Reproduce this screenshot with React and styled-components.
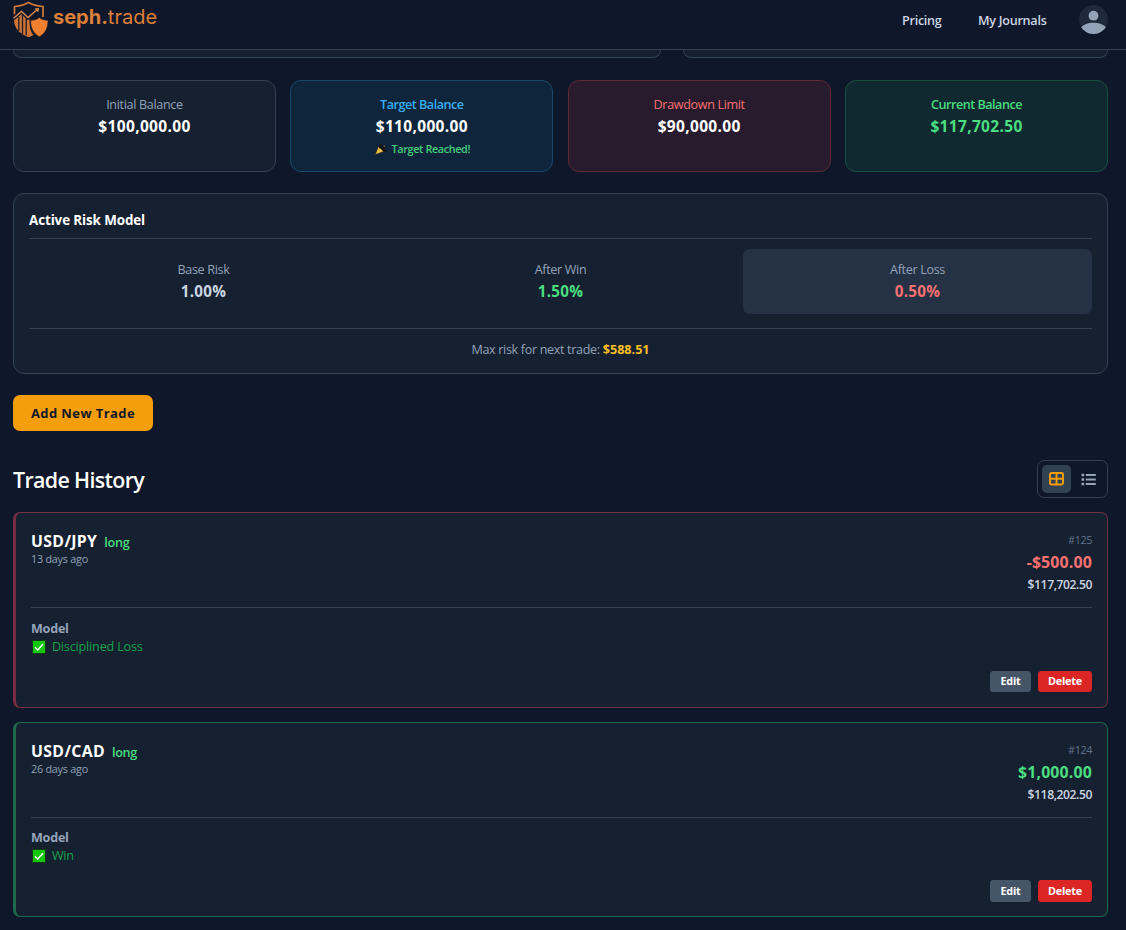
import React from "react";
import styled, { createGlobalStyle } from "styled-components";

const Global = createGlobalStyle`
  *, *::before, *::after { box-sizing: border-box; }
  html, body { margin: 0; background: #0f172a; }
  body { height: 930px; overflow: hidden; font-family: "Open Sans", "Noto Sans", sans-serif; color: #cbd5e1; }
  button { font-family: inherit; }
`;

const Page = styled.div`
  height: 930px;
  overflow: hidden;
  background: #0f172a;
`;

const Header = styled.header`
  height: 50px;
  border-bottom: 1px solid #334155;
  display: flex;
  align-items: flex-start;
  justify-content: space-between;
  padding: 0 18px 0 12px;
`;

const Brand = styled.div`
  display: flex;
  gap: 5px;
  height: 40px;
`;

const Wordmark = styled.div`
  font-family: Inter, sans-serif;
  font-size: 20px;
  line-height: 35px;
  color: #dc7f38;
  font-weight: 400;
  b { font-weight: 700; }
`;

const Nav = styled.nav`
  display: flex;
  align-items: center;
  height: 40px;
`;

const NavLink = styled.a`
  padding-top: 2px;
  font-size: 12.6px;
  font-weight: 600;
  color: #cbd5e1;
  line-height: 20px;
  width: ${(p) => p.$w}px;
  white-space: nowrap;
  letter-spacing: -0.27px;
`;

const Main = styled.main`
  padding: 0 18px 0 13px;
`;

const Stubs = styled.div`
  display: grid;
  grid-template-columns: 648px 425px;
  gap: 22px;
  height: 8px;
`;

const Stub = styled.div`
  background: #152030;
  border: 1px solid #334155;
  border-top: 0;
  border-radius: 0 0 11px 11px;
`;

const Stats = styled.section`
  display: grid;
  grid-template-columns: repeat(4, 1fr);
  gap: 14.4px;
  margin-top: 22px;
`;

const tones = {
  plain: ["#152030", "#334155", "#ffffff"],
  blue: ["#0f253c", "#164a68", "#ffffff"],
  red: ["#271b2d", "#5e2835", "#ffffff"],
  green: ["#102830", "#17513f", "#4ade80"],
};

const Stat = styled.div`
  height: 92px;
  padding-top: 14px;
  border-radius: 11px;
  text-align: center;
  background: ${(p) => tones[p.$tone][0]};
  border: 1px solid ${(p) => tones[p.$tone][1]};
  color: ${(p) => tones[p.$tone][2]};
`;

const Label = styled.div`
  font-size: 12.6px;
  line-height: 20px;
  font-weight: ${(p) => p.$weight || 400};
  color: ${(p) => p.$color || "#94a3b8"};
  letter-spacing: ${(p) => p.$ls || -0.34}px;
`;

const Value = styled.div`
  font-size: ${(p) => p.$size || 15.5}px;
  line-height: 23px;
  font-weight: 700;
  color: ${(p) => p.$color || "inherit"};
  letter-spacing: 0.33px;
`;

const Reached = styled.div`
  display: flex;
  align-items: center;
  justify-content: center;
  gap: 5px;
  padding-left: 1px;
  font-size: 10.8px;
  font-weight: 600;
  line-height: 21px;
  color: #43cf79;
  letter-spacing: -0.36px;
`;

const RiskPanel = styled.section`
  margin-top: 21px;
  height: 181px;
  padding: 0 15px;
  border: 1px solid #334155;
  border-radius: 11px;
  background: #152030;
`;

const RiskTitle = styled.h3`
  margin: 0;
  height: 45px;
  padding-top: 16px;
  border-bottom: 1px solid #334155;
  font-size: 13.4px;
  line-height: 20px;
  font-weight: 700;
  color: #fff;
  letter-spacing: -0.1px;
`;

const RiskGrid = styled.div`
  display: grid;
  grid-template-columns: repeat(3, 1fr);
  gap: 8px;
  margin-top: 10px;
`;

const RiskCell = styled.div`
  height: 65px;
  padding-top: 11px;
  border-radius: 7px;
  text-align: center;
  background: ${(p) => (p.$active ? "#253144" : "transparent")};
`;

const MaxRisk = styled.div`
  margin-top: 14px;
  padding-top: 11px;
  border-top: 1px solid #334155;
  text-align: center;
  font-size: 12.6px;
  line-height: 20px;
  color: #94a3b8;
  letter-spacing: -0.34px;
  b { color: #fbbf24; font-weight: 700; letter-spacing: 0; }
`;

const AddButton = styled.button`
  display: block;
  margin-top: 21px;
  width: 140px;
  height: 36px;
  padding: 0;
  border: 0;
  border-radius: 7px;
  background: #f59e0b;
  color: #111827;
  font-size: 13px;
  font-weight: 700;
  letter-spacing: 0.42px;
`;

const HistoryBar = styled.div`
  display: flex;
  align-items: center;
  justify-content: space-between;
  margin-top: 29px;
  height: 38px;
`;

const HistoryTitle = styled.h2`
  margin: 0;
  padding-top: 2px;
  font-size: 21.4px;
  line-height: 30px;
  font-weight: 600;
  color: #fff;
  letter-spacing: -0.65px;
`;

const Toggle = styled.div`
  display: flex;
  gap: 3px;
  width: 71px;
  height: 38px;
  padding: 4px;
  border: 1px solid #334155;
  border-radius: 7px;
`;

const ToggleButton = styled.button`
  display: flex;
  align-items: center;
  justify-content: center;
  width: 29px;
  height: 28px;
  padding: 0;
  border: 0;
  border-radius: 5px;
  color: ${(p) => (p.$active ? "#f59e0b" : "#94a3b8")};
  background: ${(p) => (p.$active ? "#334155" : "transparent")};
`;

const Trade = styled.article`
  margin-top: 14px;
  height: 195.5px;
  padding: 0 15px;
  border: 1px solid ${(p) => (p.$win ? "#1d6b4c" : "#752f40")};
  border-left-width: 3px;
  border-radius: 7px;
  background: #152030;
`;

const TradeTop = styled.div`
  display: flex;
  justify-content: space-between;
  height: 95px;
  padding-top: 17px;
  border-bottom: 1px solid #334155;
`;

const PairRow = styled.div`
  display: flex;
  align-items: baseline;
  gap: 7px;
  height: 21px;
  line-height: 22px;
`;

const Pair = styled.span`
  font-size: 15.8px;
  font-weight: 700;
  color: #fff;
  letter-spacing: 0.35px;
`;

const Side = styled.span`
  font-size: 12.6px;
  font-weight: 600;
  color: #4ade80;
  letter-spacing: -0.3px;
`;

const Ago = styled.div`
  font-size: 10.8px;
  line-height: 16px;
  color: #94a3b8;
  letter-spacing: -0.23px;
`;

const Amounts = styled.div`
  text-align: right;
`;

const Num = styled.div`
  font-size: 10.8px;
  line-height: 20px;
  color: #64748b;
  letter-spacing: -0.4px;
`;

const Pnl = styled.div`
  font-size: 15.9px;
  line-height: 25px;
  font-weight: 700;
  color: ${(p) => (p.$win ? "#4ade80" : "#f87171")};
  letter-spacing: 0.15px;
`;

const Balance = styled.div`
  font-size: 12.2px;
  line-height: 19px;
  font-weight: 600;
  color: #cbd5e1;
  letter-spacing: -0.45px;
`;

const ModelTitle = styled.div`
  margin-top: 11.6px;
  font-size: 12.6px;
  line-height: 18px;
  font-weight: 700;
  color: #94a3b8;
  letter-spacing: -0.25px;
`;

const Outcome = styled.div`
  display: flex;
  align-items: center;
  gap: 5.6px;
  padding-left: 1.3px;
  font-size: 12.6px;
  line-height: 18px;
  font-weight: 500;
  color: #16a34a;
  letter-spacing: -0.17px;
`;

const Actions = styled.div`
  display: flex;
  justify-content: flex-end;
  gap: 7px;
  margin-top: 15.4px;
`;

const ActionButton = styled.button`
  width: ${(p) => (p.$danger ? 54 : 41)}px;
  height: 21.5px;
  padding: 0 0 2px;
  border: 0;
  border-radius: 3.6px;
  background: ${(p) => (p.$danger ? "#dc2626" : "#475569")};
  color: #fff;
  font-size: 10.8px;
  font-weight: 700;
  letter-spacing: -0.2px;
`;

const Logo = () => (
  <svg width="36" height="40" viewBox="0 0 36 40" fill="none">
    <path d="M2.500 14.500V6.500C7.500 6.500 12 5 16.500 2.600C21 5 26 6.500 31 6.500V17" stroke="#d07a38" strokeWidth="1.700" />
    <path d="M2 20L9.500 13.500L16 19.500L17.500 18.500C17.300 27 18.500 31.500 21.500 35C19.800 36 18 36.800 16.500 37.200C7 33.500 2.200 28 2 20Z" fill="#d07434" />
    <path d="M6.800 17V31M10.500 15V34M14.200 18V35.500" stroke="#1c1d2a" strokeWidth="1.300" />
    <path d="M1.500 18.300L9.500 11.500L16 17.500L25.500 9.200" stroke="#0f172a" strokeWidth="4" />
    <path d="M1.500 18.300L9.500 11.500L16 17.500L25.500 9.200" stroke="#d98a4a" strokeWidth="1.400" />
    <path d="M22.500 8.500L27 8L26.300 12.500Z" fill="#d98a4a" />
    <path d="M27.300 17.500C29.800 19.500 32.500 20.200 36 20.200C36.200 28 33.200 33.500 27.300 36.800C21.300 33.500 18.400 28 18.600 20.200C22 20.200 24.800 19.500 27.300 17.500Z" fill="#f08030" stroke="#0f172a" strokeWidth="0.700" />
  </svg>
);

const Avatar = () => (
  <svg width="29" height="30" viewBox="0 0 29 30">
    <defs><clipPath id="avatar"><circle cx="14.500" cy="14.500" r="14.500" /></clipPath></defs>
    <circle cx="14.500" cy="14.500" r="14.500" fill="#1e293b" />
    <g clipPath="url(#avatar)" fill="#94a3b8">
      <circle cx="14.500" cy="10.700" r="4.900" />
      <path d="M2 22.500C5 19 10 17.800 14.500 17.800C19 17.800 24 19 27 22.500V30H2Z" />
    </g>
  </svg>
);

const Party = () => (
  <svg width="12" height="12" viewBox="0 0 12 12">
    <path d="M0.300 11.500L3.500 3.500L8.700 8.500Z" fill="#f0c048" stroke="#1d1712" strokeWidth="0.400" />
    <path d="M4 4.500C6.500 4.500 6.500 2.500 5.200 1.200M7 6.500L10 3.500M8 8C9.500 7 10.500 7.300 11.500 8.500" stroke="#17120e" strokeWidth="2" fill="none" />
    <circle cx="9.300" cy="3.200" r="0.700" fill="#a0702a" />
  </svg>
);

const Check = () => (
  <svg width="14" height="14" viewBox="0 0 14 14">
    <rect x="0.500" y="0.500" width="13" height="13" rx="0.800" fill="#16c60c" stroke="#0a3d14" />
    <path d="M3 7.200L5.700 10L11 4.200" fill="none" stroke="#fff" strokeWidth="1.400" />
  </svg>
);

const GridIcon = () => (
  <svg width="15" height="14" viewBox="0 0 15 14" fill="none" stroke="currentColor" strokeWidth="1.900">
    <rect x="1" y="1" width="13" height="11.500" rx="1.500" />
    <path d="M7.500 1V12.500M1 6.800H14" />
  </svg>
);

const ListIcon = () => (
  <svg width="15" height="13" viewBox="0 0 15 13" fill="none" stroke="currentColor" strokeWidth="1.900">
    <path d="M4.800 2H14.800M4.800 6.500H14.800M4.800 11H14.800" />
    <path d="M0.500 2H3.200M0.500 6.500H3.200M0.500 11H3.200" strokeWidth="2.600" />
  </svg>
);

const trades = [
  { pair: "USD/JPY", ago: "13 days ago", num: "#125", pnl: "-$500.00", bal: "$117,702.50", out: "Disciplined Loss", win: false },
  { pair: "USD/CAD", ago: "26 days ago", num: "#124", pnl: "$1,000.00", bal: "$118,202.50", out: "Win", win: true },
];

export default function App() {
  return (
    <Page>
      <Global />
      <Header>
        <Brand>
          <Logo />
          <Wordmark><b>seph.</b>trade</Wordmark>
        </Brand>
        <Nav>
          <NavLink $w={76}>Pricing</NavLink>
          <NavLink $w={101}>My Journals</NavLink>
          <Avatar />
        </Nav>
      </Header>
      <Main>
        <Stubs><Stub /><Stub /></Stubs>
        <Stats>
          <Stat $tone="plain"><Label>Initial Balance</Label><Value>$100,000.00</Value></Stat>
          <Stat $tone="blue">
            <Label $weight={600} $color="#38aef0" $ls={-0.48}>Target Balance</Label>
            <Value>$110,000.00</Value>
            <Reached><Party />Target Reached!</Reached>
          </Stat>
          <Stat $tone="red"><Label $weight={500} $color="#f87171" $ls={-0.36}>Drawdown Limit</Label><Value>$90,000.00</Value></Stat>
          <Stat $tone="green"><Label $weight={600} $color="#4ade80" $ls={-0.5}>Current Balance</Label><Value>$117,702.50</Value></Stat>
        </Stats>
        <RiskPanel>
          <RiskTitle>Active Risk Model</RiskTitle>
          <RiskGrid>
            <RiskCell><Label>Base Risk</Label><Value $size={15.2} $color="#cbd5e1">1.00%</Value></RiskCell>
            <RiskCell><Label>After Win</Label><Value $size={15.2} $color="#4ade80">1.50%</Value></RiskCell>
            <RiskCell $active><Label>After Loss</Label><Value $size={15.2} $color="#f87171">0.50%</Value></RiskCell>
          </RiskGrid>
          <MaxRisk>Max risk for next trade: <b>$588.51</b></MaxRisk>
        </RiskPanel>
        <AddButton>Add New Trade</AddButton>
        <HistoryBar>
          <HistoryTitle>Trade History</HistoryTitle>
          <Toggle>
            <ToggleButton $active aria-label="Grid view"><GridIcon /></ToggleButton>
            <ToggleButton aria-label="List view"><ListIcon /></ToggleButton>
          </Toggle>
        </HistoryBar>
        {trades.map((t) => (
          <Trade key={t.num} $win={t.win}>
            <TradeTop>
              <div>
                <PairRow><Pair>{t.pair}</Pair><Side>long</Side></PairRow>
                <Ago>{t.ago}</Ago>
              </div>
              <Amounts>
                <Num>{t.num}</Num>
                <Pnl $win={t.win}>{t.pnl}</Pnl>
                <Balance>{t.bal}</Balance>
              </Amounts>
            </TradeTop>
            <ModelTitle>Model</ModelTitle>
            <Outcome><Check />{t.out}</Outcome>
            <Actions>
              <ActionButton>Edit</ActionButton>
              <ActionButton $danger>Delete</ActionButton>
            </Actions>
          </Trade>
        ))}
      </Main>
    </Page>
  );
}
